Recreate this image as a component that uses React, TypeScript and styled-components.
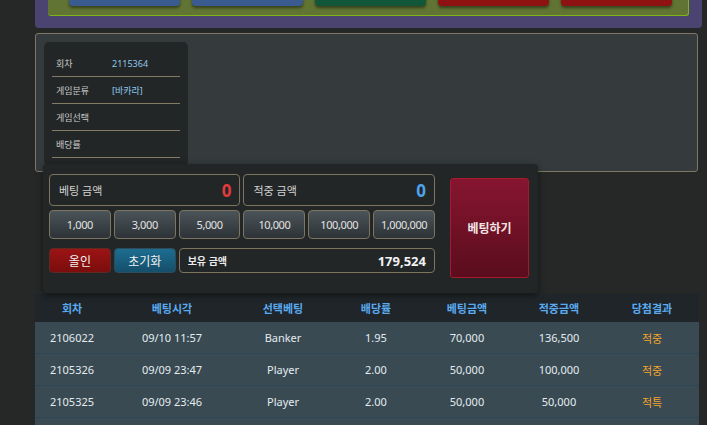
import React from "react";
import styled, { createGlobalStyle } from "styled-components";

const GlobalStyle = createGlobalStyle`
  html, body {
    margin: 0;
    padding: 0;
    overflow: hidden;
    background: #262827;
    font-family: "Noto Sans", "Noto Sans CJK KR", sans-serif;
  }
  * { box-sizing: border-box; }
`;

const Page = styled.div`
  display: flex;
  flex-direction: column;
  padding: 0 5px 0 35px;
  width: 707px;
`;

const GamePanel = styled.div`
  margin-top: -46px;
  background: #4b4470;
  border-radius: 0 0 4px 4px;
  padding: 12px 13px 12px;
`;

const GameInner = styled.div`
  display: grid;
  grid-template-columns: repeat(5, 111px);
  gap: 12px;
  padding: 10px 16px 9px 21px;
  background: #617433;
  border-right: 1px solid #7fb51a;
  border-bottom: 1px solid #7fb51a;
  border-radius: 0 0 3px 3px;
`;

const GameButton = styled.div<{ $tone: "blue" | "green" | "red" }>`
  height: 30px;
  border-radius: 4px;
  background: ${(p) =>
    p.$tone === "blue" ? "#3a5b8f" : p.$tone === "green" ? "#13573a" : "#8f1212"};
  box-shadow: 0 2px 3px rgba(0, 0, 0, 0.45);
`;

const InfoBox = styled.div`
  margin-top: 5px;
  width: 663px;
  height: 139px;
  padding: 8px;
  background: #353b3c;
  border: 1px solid #7d7866;
  border-radius: 3px;
`;

const InfoCard = styled.div`
  width: 144px;
  height: 124px;
  padding: 8px 8px 0;
  background: #222627;
  border-radius: 5px;
`;

const InfoRow = styled.div`
  display: flex;
  align-items: center;
  height: 27px;
  padding-left: 4px;
  border-bottom: 1px solid #857c68;
  font-size: 9px;
  color: #c9c9c9;
`;

const InfoLabel = styled.span`
  width: 56px;
`;

const InfoValue = styled.span`
  color: #8fc8ee;
`;

const BetPanel = styled.div`
  position: relative;
  z-index: 1;
  margin: -8px 0 0 8px;
  width: 495px;
  display: flex;
  gap: 15px;
  padding: 10px 9px 15px 6px;
  background: #222627;
  border-radius: 4px;
  box-shadow: 0 2px 6px rgba(0, 0, 0, 0.5);
`;

const BetColumn = styled.div`
  width: 386px;
  display: grid;
  grid-template-columns: repeat(6, 1fr);
  grid-template-rows: 32px 29px 30px;
  column-gap: 3px;
  row-gap: 4px;
  & > .last {
    margin-top: 5px;
  }
`;

const AmountBox = styled.div<{ $span: number }>`
  grid-column: span ${(p) => p.$span};
  display: flex;
  align-items: center;
  justify-content: space-between;
  padding: 0 8px 0 9px;
  border: 1px solid #7d7560;
  border-radius: 4px;
  background: #222627;
  color: #d2d2d2;
  font-size: 11px;
`;

const AmountValue = styled.span<{ $color: string }>`
  color: ${(p) => p.$color};
  font-size: 17px;
  font-weight: 700;
`;

const ChipButton = styled.div`
  display: flex;
  align-items: center;
  justify-content: center;
  border: 1px solid #7d7560;
  border-radius: 4px;
  background: linear-gradient(#4b5459, #2d3337);
  color: #e2e2e2;
  font-size: 11px;
  letter-spacing: -0.4px;
`;

const ActionButton = styled.div<{ $tone: "red" | "blue" }>`
  display: flex;
  align-items: center;
  justify-content: center;
  border-radius: 4px;
  border: 1px solid ${(p) => (p.$tone === "red" ? "#5e2a22" : "#2e4d5c")};
  background: ${(p) =>
    p.$tone === "red"
      ? "linear-gradient(#9c1414, #7a0d0d)"
      : "linear-gradient(#1d6d90, #154f6b)"};
  color: #f2f2f2;
  font-size: 12px;
`;

const HoldBox = styled(AmountBox)`
  padding: 0 8px 0 8px;
`;

const HoldLabel = styled.span`
  color: #ececec;
  font-size: 10px;
  font-weight: 700;
`;

const HoldValue = styled.span`
  color: #f2f2f2;
  font-size: 13px;
  font-weight: 700;
`;

const BetButton = styled.div`
  margin-top: 4px;
  width: 79px;
  height: 100px;
  display: flex;
  align-items: center;
  justify-content: center;
  border: 1px solid #a51a2c;
  border-radius: 3px;
  background: linear-gradient(#861530, #5a0d1d);
  color: #f1e4e4;
  font-size: 12px;
  font-weight: 700;
`;

const COLS = "74px 126px 96px 90px 92px 92px 94px";

const Table = styled.div`
  margin-top: 1px;
  width: 664px;
  display: flex;
  flex-direction: column;
`;

const HeaderRow = styled.div`
  display: grid;
  grid-template-columns: ${COLS};
  height: 28px;
  align-items: center;
  background: #1f2528;
`;

const HeaderCell = styled.div`
  text-align: center;
  color: #5aaaf0;
  font-size: 11px;
  font-weight: 700;
`;

const BodyRow = styled.div`
  display: grid;
  grid-template-columns: ${COLS};
  height: 32px;
  align-items: center;
  background: #394a53;
  border-bottom: 1px solid #2b4657;
`;

const Cell = styled.div<{ $result?: boolean }>`
  text-align: center;
  color: ${(p) => (p.$result ? "#f2a52c" : "#e4ecf0")};
  font-size: 11px;
`;

const infoRows = [
  { label: "회차", value: "2115364" },
  { label: "게임분류", value: "[바카라]" },
  { label: "게임선택", value: "" },
  { label: "배당률", value: "" },
];

const chips = ["1,000", "3,000", "5,000", "10,000", "100,000", "1,000,000"];

const headers = ["회차", "베팅시각", "선택베팅", "배당률", "베팅금액", "적중금액", "당첨결과"];

const rows = [
  ["2106022", "09/10 11:57", "Banker", "1.95", "70,000", "136,500", "적중"],
  ["2105326", "09/09 23:47", "Player", "2.00", "50,000", "100,000", "적중"],
  ["2105325", "09/09 23:46", "Player", "2.00", "50,000", "50,000", "적특"],
  ["", "", "", "", "", "", ""],
];

export default function App() {
  return (
    <>
      <GlobalStyle />
      <Page>
        <GamePanel>
          <GameInner>
            <GameButton $tone="blue" />
            <GameButton $tone="blue" />
            <GameButton $tone="green" />
            <GameButton $tone="red" />
            <GameButton $tone="red" />
          </GameInner>
        </GamePanel>

        <InfoBox>
          <InfoCard>
            {infoRows.map((r) => (
              <InfoRow key={r.label}>
                <InfoLabel>{r.label}</InfoLabel>
                <InfoValue>{r.value}</InfoValue>
              </InfoRow>
            ))}
          </InfoCard>
        </InfoBox>

        <BetPanel>
          <BetColumn>
            <AmountBox $span={3}>
              베팅 금액
              <AmountValue $color="#e23b3b">0</AmountValue>
            </AmountBox>
            <AmountBox $span={3}>
              적중 금액
              <AmountValue $color="#4ea3ea">0</AmountValue>
            </AmountBox>
            {chips.map((c) => (
              <ChipButton key={c}>{c}</ChipButton>
            ))}
            <ActionButton $tone="red" className="last">
              올인
            </ActionButton>
            <ActionButton $tone="blue" className="last">
              초기화
            </ActionButton>
            <HoldBox $span={4} className="last">
              <HoldLabel>보유 금액</HoldLabel>
              <HoldValue>179,524</HoldValue>
            </HoldBox>
          </BetColumn>
          <BetButton>베팅하기</BetButton>
        </BetPanel>

        <Table>
          <HeaderRow>
            {headers.map((h) => (
              <HeaderCell key={h}>{h}</HeaderCell>
            ))}
          </HeaderRow>
          {rows.map((r, ri) => (
            <BodyRow key={ri}>
              {r.map((v, i) => (
                <Cell key={i} $result={i === 6}>
                  {v}
                </Cell>
              ))}
            </BodyRow>
          ))}
        </Table>
      </Page>
    </>
  );
}
